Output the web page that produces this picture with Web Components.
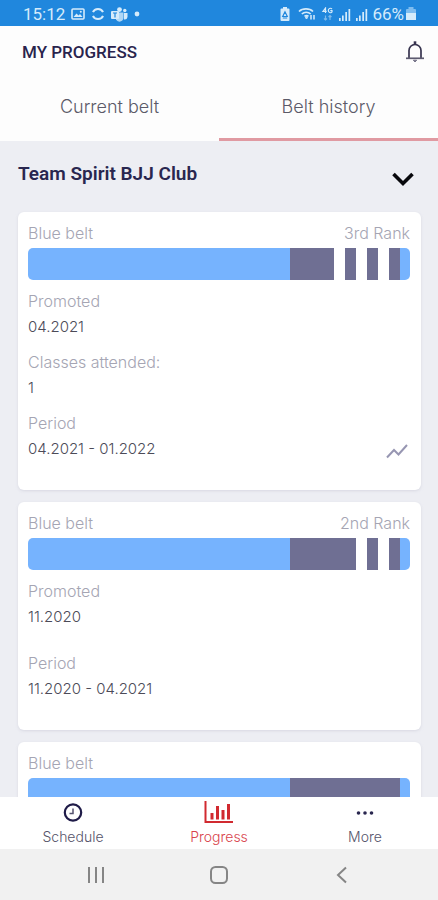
<!DOCTYPE html>
<html lang="en">
<head>
<meta charset="utf-8">
<meta name="viewport" content="width=device-width, initial-scale=1">
<title>My progress</title>
<style>
  html, body { margin: 0; height: 100%; }
  body { font-family: Inter, "Liberation Sans", sans-serif; background: #edeef3; }
</style>
</head>
<body>
<progress-app></progress-app>

<script>
const define = (name, html, setup) => {
  const template = document.createElement('template');
  template.innerHTML = '<style>*{box-sizing:border-box}</style>' + html;
  customElements.define(name, class extends HTMLElement {
    connectedCallback() {
      if (this.shadowRoot) return;
      this.attachShadow({ mode: 'open' }).append(template.content.cloneNode(true));
      if (setup) setup(this, this.shadowRoot);
    }
  });
};

define('status-bar', `
<style>
  :host { display: flex; align-items: center; justify-content: space-between; flex: none; height: 26px;
    padding: 2px 21px 0 23px; background: #2087dd; color: #d5ebfb; font: 400 17px/24px Roboto, sans-serif; }
  div { display: flex; align-items: center; }
  svg { display: block; }
  .left { gap: 6px; }
  .right { gap: 4px; }
  .charge { display: flex; gap: 1px; }
</style>
<div class="left">
  <span>15:12</span>
  <svg width="14" height="12" viewBox="0 0 14 12"><rect x="1" y="1" width="12" height="10" rx="1" fill="none" stroke="currentColor" stroke-width="1.6"/><path d="M2.5 9 5.5 5.5 7.5 7.5 9 6l2.6 3z" fill="currentColor"/><circle cx="9.8" cy="3.8" r="1" fill="currentColor"/></svg>
  <svg width="14" height="14" viewBox="0 0 14 14" fill="none" stroke="currentColor" stroke-width="2"><path d="M2 5.200C3.600 1 10.400 1 12 5.200M2 8.800c1.600 4.200 8.400 4.200 10 0"/></svg>
  <svg width="17" height="15" viewBox="0 0 17 15" fill="currentColor"><circle cx="8.500" cy="2.600" r="2.400"/><circle cx="13.800" cy="3.500" r="1.700"/><path d="M5 5.500h7.500V11a4 4 0 0 1-7.500 1.500z" opacity=".8"/><path d="M13 6h3.500v4a3 3 0 0 1-3.500 2.500z"/><rect y="4" width="8" height="8" rx="1"/><path d="M2 6h4M4 6v4.500" stroke="#2087dd" stroke-width="1.200"/></svg>
  <svg width="12" height="6" viewBox="0 0 12 6"><circle cx="3" cy="3" r="2.400" fill="currentColor"/></svg>
</div>
<div class="right">
  <svg width="12" height="14" viewBox="0 0 12 14"><path d="M4 0h4v1.500h1.500a1 1 0 0 1 1 1V13a1 1 0 0 1-1 1h-7a1 1 0 0 1-1-1V2.500a1 1 0 0 1 1-1H4z" fill="currentColor"/><path d="M6 4.800 3.700 9.500h4.600zM3.800 11h4.400" fill="none" stroke="#2087dd" stroke-width="1.200"/></svg>
  <svg width="22" height="14" viewBox="-3 0 22 14" fill="none" stroke="currentColor" stroke-width="1.600"><path d="M1 4.500C4.500 1 11.500 1 15 4.500M3.800 7c2.400-2.300 6.500-2.300 8.900 0M6.500 9.300c1.200-1 2.800-1 4 0"/><circle cx="8.500" cy="10.500" r=".6"/><path d="M13 8v4.500M16 12.500V8" stroke-width="1.500"/></svg>
  <svg width="13" height="14" viewBox="0 0 13 14" fill="none" stroke="currentColor" stroke-width="1.200"><path d="M4.500 6V1L2 4.300h3.700M11 2C9.500.5 7.300 1.500 7.300 3.500S10 6.500 11 5V3.600H9.300"/><path d="M4.500 8.500V13M3 11.500 4.500 13 6 11.500M9 13V8.500M7.500 10 9 8.500l1.500 1.500" opacity=".5"/></svg>
  <svg width="13" height="13" viewBox="0 0 13 13" fill="currentColor"><path d="M1 10h1.700v3H1zM4 7.500h1.700V13H4zM7.300 4H9v9H7.300zM10.500 1h1.700v12h-1.700z"/></svg>
  <svg width="13" height="13" viewBox="0 0 13 13" fill="currentColor"><path d="M1 10h1.700v3H1zM4 7.500h1.700V13H4zM7.300 4H9v9H7.300zM10.500 1h1.700v12h-1.700z"/></svg>
  <span class="charge"><span>66%</span>
  <svg width="12" height="24" viewBox="0 -5 12 24"><path d="M3.500 0h5v2H10a1 1 0 0 1 1 1v10H1V3a1 1 0 0 1 1-1h1.500z" fill="#7fbdf0"/><path d="M1 6h10v7H1z" fill="currentColor"/></svg></span>
</div>`);

define('page-header', `
<style>
  :host { display: block; flex: none; background: #fdfdfd; }
  header { display: flex; align-items: center; justify-content: space-between; height: 52px; padding: 0 12px 0 22px; }
  h1 { margin: 0; color: #29244d; font: 500 17px/24px Roboto, sans-serif; }
  button { border: 0; padding: 0; background: none; }
  svg { display: block; }
</style>
<header>
  <h1>MY PROGRESS</h1>
  <button aria-label="Notifications"><svg width="22" height="24" viewBox="0 0 22 24" fill="none" stroke="#37344f" stroke-width="1.700"><path d="M5 18V10.500a6 6 0 0 1 12 0V18"/><path d="M2 18.300h18" stroke="#5d5b70"/><path d="M11 1.300v3" stroke-width="2.600"/><path d="M9.300 20.200h3.400L11 22z" fill="#77758a" stroke="#77758a" stroke-width="1"/></svg></button>
</header>
<slot></slot>`);

define('tab-strip', `
<style>
  :host { display: flex; }
  button { flex: 1; height: 63px; border: 0; border-bottom: 3px solid transparent; background: none; padding: 0 0 2px;
    color: #5b5a68; font: 300 18px/24px Inter, sans-serif; }
  button[aria-selected="true"] { border-color: #e09aa2; }
</style>
<button role="tab" aria-selected="false">Current belt</button>
<button role="tab" aria-selected="true">Belt history</button>`, el => el.setAttribute('role', 'tablist'));

define('club-heading', `
<style>
  :host { display: flex; align-items: center; justify-content: space-between; height: 71px; padding: 0 23px 0 18px; }
  h2 { margin: 0; padding-bottom: 6px; color: #29264f; font: 600 19px/26px Roboto, sans-serif; }
  button { border: 0; padding: 4px 0 0; background: none; }
  svg { display: block; }
</style>
<h2><slot></slot></h2>
<button aria-label="Collapse club"><svg width="24" height="16" viewBox="0 0 24 16"><path d="m2.500 3 9.500 9.500L21.500 3" fill="none" stroke="#08080c" stroke-width="3.600"/></svg></button>`);

define('belt-bar', `
<style>
  :host { display: flex; height: 32px; border-radius: 5px; overflow: hidden; background: #76b3fe; padding-right: 10px; justify-content: flex-end; }
  .rank { display: flex; justify-content: flex-end; gap: 11px; width: 110px; padding-right: 11px; background: #6f6f93; }
  i { width: 11px; background: #fff; }
</style>
<div class="rank"></div>`, (el, root) => {
  const rank = root.querySelector('.rank');
  for (let n = Number(el.getAttribute('stripes')); n > 0; n--) rank.append(document.createElement('i'));
});

define('belt-card', `
<style>
  :host { display: block; padding: 9px 11px 28px 10px; border-radius: 6px; background: #fff; box-shadow: 0 1px 3px #c9cad599; color: #a5a5b3; }
  .title { display: flex; justify-content: space-between; padding-bottom: 2px; font: 300 16px/25px Inter, sans-serif; }
  .body { display: flex; align-items: flex-end; justify-content: space-between; margin-top: 9px; }
  .fields { display: grid; gap: 10px; }
  :host([spacious]) .fields { gap: 21px; }
</style>
<div class="title"><span><slot name="belt"></slot></span><span><slot name="rank"></slot></span></div>
<slot name="bar"></slot>
<div class="body"><div class="fields"><slot></slot></div><slot name="action"></slot></div>`);

define('belt-field', `
<style>
  :host { display: block; }
  dl, dd { margin: 0; }
  dt { color: #a5a5b3; font: 300 16px/25px Inter, sans-serif; }
  dd { color: #4c4b58; font: 300 15px/26px Inter, sans-serif; }
</style>
<dl><dt></dt><dd><slot></slot></dd></dl>`, (el, root) => { root.querySelector('dt').textContent = el.getAttribute('label'); });

define('trend-button', `
<style>:host { display: block; } button { display: block; border: 0; padding: 0 0 2px; background: none; } svg { display: block; }</style>
<button aria-label="Show trend"><svg width="25" height="18" viewBox="0 0 25 18"><path d="m2 15.500 7-7.500 4.500 4.500L22 3" fill="none" stroke="#9796b2" stroke-width="2"/></svg></button>`);

define('bottom-tabs', `
<style>
  :host { display: block; flex: none; background: #fff; }
  nav { display: flex; height: 52px; }
  a { flex: 1; display: flex; flex-direction: column; align-items: center; gap: 3px; padding-top: 4px; text-decoration: none; color: #56546a; font: 300 14px/18px Inter, sans-serif; }
  a[aria-current] { color: #d8434b; }
  svg { display: block; }
</style>
<nav>
  <a href="#schedule"><svg width="30" height="24" viewBox="0 0 30 24" fill="none"><circle cx="15" cy="11.500" r="8.200" stroke="#1f1b48" stroke-width="2.200"/><path d="M15 7.500v5h-3.500" stroke="#55536f" stroke-width="1.500"/></svg>Schedule</a>
  <a href="#progress" aria-current="page"><svg width="30" height="24" viewBox="0 0 30 24" fill="none" stroke="#d12a30"><path d="M1.500 0v21H29" stroke-width="2"/><path d="M8 12v6.500M13.500 5v13.500M19 9v9.500M24.500 3v15.500" stroke-width="3"/></svg>Progress</a>
  <a href="#more"><svg width="30" height="24" viewBox="0 0 30 24" fill="#29264f"><circle cx="8.500" cy="12" r="1.800"/><circle cx="15" cy="12" r="1.800"/><circle cx="21.500" cy="12" r="1.800"/></svg>More</a>
</nav>`);

define('system-nav', `
<style>
  :host { display: flex; flex: none; align-items: center; justify-content: space-around; height: 51px; padding: 0 35px; background: #f1f1f1; }
  button { display: block; border: 0; padding: 0; background: none; }
  svg { display: block; }
</style>
<button aria-label="Recent apps"><svg width="20" height="20" viewBox="0 0 20 20" fill="none" stroke="#858585" stroke-width="2"><path d="M3 2v16M10 2v16M17 2v16"/></svg></button>
<button aria-label="Home"><svg width="20" height="20" viewBox="0 0 20 20" fill="none" stroke="#858585" stroke-width="2"><rect x="2" y="2" width="16" height="16" rx="4.500"/></svg></button>
<button aria-label="Back"><svg width="20" height="20" viewBox="0 0 20 20" fill="none" stroke="#858585" stroke-width="2"><path d="m14 2.500-8 7.500 8 7.500"/></svg></button>`);

define('progress-app', `
<style>
  :host { display: flex; flex-direction: column; height: 100vh; }
  main { flex: 1; min-height: 0; overflow: hidden; background: #edeef3; }
  .cards { display: grid; gap: 12px; padding: 0 17px 0 18px; }
</style>
<status-bar></status-bar>
<page-header><tab-strip></tab-strip></page-header>
<main>
  <club-heading>Team Spirit BJJ Club</club-heading>
  <div class="cards">
    <belt-card>
      <span slot="belt">Blue belt</span><span slot="rank">3rd Rank</span>
      <belt-bar slot="bar" stripes="3"></belt-bar>
      <belt-field label="Promoted">04.2021</belt-field>
      <belt-field label="Classes attended:">1</belt-field>
      <belt-field label="Period">04.2021 - 01.2022</belt-field>
      <trend-button slot="action"></trend-button>
    </belt-card>
    <belt-card spacious>
      <span slot="belt">Blue belt</span><span slot="rank">2nd Rank</span>
      <belt-bar slot="bar" stripes="2"></belt-bar>
      <belt-field label="Promoted">11.2020</belt-field>
      <belt-field label="Period">11.2020 - 04.2021</belt-field>
    </belt-card>
    <belt-card>
      <span slot="belt">Blue belt</span>
      <belt-bar slot="bar" stripes="0"></belt-bar>
    </belt-card>
  </div>
</main>
<bottom-tabs></bottom-tabs>
<system-nav></system-nav>`);
</script>
</body>
</html>
